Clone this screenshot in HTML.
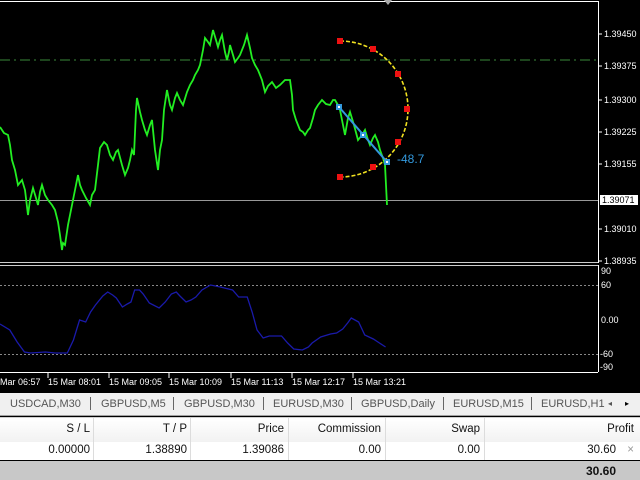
<!DOCTYPE html>
<html><head><style>
*{margin:0;padding:0}
body{width:640px;height:480px;overflow:hidden;background:#000;font-family:"Liberation Sans",sans-serif;position:relative}
.ax{position:absolute;color:#fff;font-size:9px;white-space:nowrap}
.tabs{position:absolute;left:0;top:393px;width:640px;height:22px;background:#f0f0f0;border-bottom:1px solid #a0a0a0;font-size:11px;color:#555}
.tabs span{position:absolute;top:5px}
.tabs i{position:absolute;top:4px;width:1px;height:13px;background:#666}
.hdr{position:absolute;left:0;top:417px;width:640px;height:24px;background:linear-gradient(#fff,#f2f2f2);border-top:1px solid #d0d0d0;border-bottom:1px solid #d5d5d5;font-size:11.5px;color:#111}
.row{position:absolute;left:0;top:442px;width:640px;height:18px;background:#fff;font-size:11.5px;color:#111}
.hdr div,.row div{position:absolute;top:5px;text-align:right}
.row div{top:2px}
.hdr b,.row b{position:absolute;top:0;width:1px;height:100%;background:#dcdcdc}
.foot{position:absolute;left:0;top:461px;width:640px;height:19px;background:#c8c8c8;font-size:12px;font-weight:bold;color:#111}
</style></head><body>
<svg width="640" height="392" style="position:absolute;left:0;top:0">
<line x1="0" y1="1.5" x2="598" y2="1.5" stroke="#fff"/>
<line x1="598.5" y1="1" x2="598.5" y2="263" stroke="#fff"/>
<line x1="0" y1="262.5" x2="598" y2="262.5" stroke="#ccc"/>
<line x1="0" y1="265.5" x2="598" y2="265.5" stroke="#ccc"/>
<line x1="598.5" y1="265" x2="598.5" y2="372" stroke="#fff"/>
<line x1="0" y1="372.5" x2="598" y2="372.5" stroke="#fff"/>
<polygon points="384,0 392,0 388,5" fill="#aaa"/>
<line x1="0" y1="60" x2="598" y2="60" stroke="#3a8a3a" stroke-dasharray="10,4,2,4"/>
<line x1="0" y1="200.5" x2="598" y2="200.5" stroke="#999"/>
<g stroke="#fff"><line x1="598" y1="34" x2="602" y2="34"/><line x1="598" y1="66" x2="602" y2="66"/><line x1="598" y1="100" x2="602" y2="100"/><line x1="598" y1="132" x2="602" y2="132"/><line x1="598" y1="164" x2="602" y2="164"/><line x1="598" y1="229" x2="602" y2="229"/><line x1="598" y1="261" x2="602" y2="261"/></g>
<polyline fill="none" stroke="#22ee22" stroke-width="1.8" points="0,127 4,133 8,135 10,145 12,160 15,170 18,185 22,180 25,190 28,215 30,200 33,188 36,198 38,205 40,192 42,185 45,195 48,200 52,205 55,210 58,222 60,235 62,250 63,243 65,245 68,225 70,215 74,195 78,175 80,185 82,190 86,198 90,205 92,195 95,190 98,165 100,148 104,142 107,145 110,155 113,160 116,152 118,150 122,165 125,175 128,168 130,160 132,150 134,155 136,110 137,98 140,112 142,120 145,130 147,135 150,125 152,120 155,150 158,170 160,150 162,140 164,110 167,90 170,105 172,110 175,98 177,93 180,100 183,105 187,92 190,85 193,80 195,75 198,70 200,65 203,50 205,38 208,42 210,45 212,35 213,30 216,40 218,47 220,40 222,35 225,52 227,60 229,52 230,45 233,55 235,62 238,58 240,55 244,45 247,35 250,48 252,58 255,65 258,70 260,75 262,80 264,88 265,92 268,86 272,82 276,88 280,85 285,80 290,80 292,95 293,110 296,120 300,130 303,132 305,135 308,130 310,128 313,118 315,110 318,105 322,100 326,104 330,105 333,100 335,100 338,105 340,110 343,125 345,135 348,118 350,112 354,125 358,140 362,135 365,130 368,140 370,145 373,138 375,135 378,142 380,150 383,158 385,165 386,185 387,205"/>
<path d="M340,41 A68,68 0 0 1 340,177" fill="none" stroke="#f0e020" stroke-width="1.6" stroke-dasharray="4,2"/>
<g fill="#ee1111"><rect x="337" y="38" width="6" height="6"/><rect x="370" y="46" width="6" height="6"/><rect x="395" y="71" width="6" height="6"/><rect x="404" y="106" width="6" height="6"/><rect x="395" y="139" width="6" height="6"/><rect x="370" y="164" width="6" height="6"/><rect x="337" y="174" width="6" height="6"/></g>
<line x1="339" y1="107" x2="387" y2="162" stroke="#3399dd" stroke-width="2"/>
<g fill="#fff" stroke="#3399dd" stroke-width="2"><rect x="337" y="105" width="4" height="4"/><rect x="361" y="133" width="4" height="4"/><rect x="385" y="160" width="4" height="4"/></g>
<text x="397" y="163" fill="#3399dd" font-size="12" font-family="Liberation Sans">-48.7</text>
<line x1="0" y1="285.5" x2="598" y2="285.5" stroke="#888" stroke-dasharray="2,2"/>
<line x1="0" y1="354.5" x2="598" y2="354.5" stroke="#888" stroke-dasharray="2,2"/>
<g transform="scale(1.224,1)"><polyline fill="none" stroke="#1a1aaa" stroke-width="1.3" vector-effect="non-scaling-stroke" points="0,324 8,330 14,342 20,352 25,353 37,352 45,353 55,353 60,340 65,320 70,322 74,312 78,305 84,296 88,292 92,295 95,298 100,307 104,304 107,302 110,290 114,290 117,294 122,303 130,308 135,302 140,294 144,292 147,296 152,302 156,300 160,297 165,290 172,285 180,287 190,290 195,297 202,297 206,312 210,330 215,338 220,336 230,336 235,343 240,349 247,350 252,347 255,343 262,337 270,334 275,333 280,329 284,323 287,318 293,322 298,335 305,339 310,343 315,347"/></g>
<g stroke="#fff"><line x1="48" y1="373" x2="48" y2="378"/><line x1="109" y1="373" x2="109" y2="378"/><line x1="169" y1="373" x2="169" y2="378"/><line x1="231" y1="373" x2="231" y2="378"/><line x1="292" y1="373" x2="292" y2="378"/><line x1="353" y1="373" x2="353" y2="378"/></g>
</svg>
<div class="ax" style="left:604px;top:29px">1.39450</div>
<div class="ax" style="left:604px;top:61px">1.39375</div>
<div class="ax" style="left:604px;top:95px">1.39300</div>
<div class="ax" style="left:604px;top:127px">1.39225</div>
<div class="ax" style="left:604px;top:159px">1.39155</div>
<div class="ax" style="left:600px;top:195px;background:#fff;color:#000;padding:0 3px 0 2px">1.39071</div>
<div class="ax" style="left:604px;top:224px">1.39010</div>
<div class="ax" style="left:604px;top:256px">1.38935</div>
<div class="ax" style="left:601px;top:266px">90</div>
<div class="ax" style="left:601px;top:280px">60</div>
<div class="ax" style="left:601px;top:315px">0.00</div>
<div class="ax" style="left:600px;top:349px">-60</div>
<div class="ax" style="left:600px;top:362px">-90</div>
<div class="ax" style="left:0;top:377px">Mar 06:57</div>
<div class="ax" style="left:48px;top:377px">15 Mar 08:01</div>
<div class="ax" style="left:109px;top:377px">15 Mar 09:05</div>
<div class="ax" style="left:169px;top:377px">15 Mar 10:09</div>
<div class="ax" style="left:231px;top:377px">15 Mar 11:13</div>
<div class="ax" style="left:292px;top:377px">15 Mar 12:17</div>
<div class="ax" style="left:353px;top:377px">15 Mar 13:21</div>
<div class="tabs">
<span style="left:10px">USDCAD,M30</span><i style="left:90px"></i>
<span style="left:101px">GBPUSD,M5</span><i style="left:173px"></i>
<span style="left:184px">GBPUSD,M30</span><i style="left:263px"></i>
<span style="left:273px">EURUSD,M30</span><i style="left:351px"></i>
<span style="left:361px">GBPUSD,Daily</span><i style="left:443px"></i>
<span style="left:453px">EURUSD,M15</span><i style="left:531px"></i>
<span style="left:541px">EURUSD,H1</span>
<span style="left:608px;font-size:8px;top:6px">◂</span><span style="left:625px;font-size:8px;top:6px;color:#000">▸</span>
</div>
<div class="hdr">
<div style="right:550px">S / L</div><b style="left:93px"></b>
<div style="right:453px">T / P</div><b style="left:190px"></b>
<div style="right:356px">Price</div><b style="left:288px"></b>
<div style="right:259px">Commission</div><b style="left:385px"></b>
<div style="right:160px">Swap</div><b style="left:484px"></b>
<div style="right:6px">Profit</div>
</div>
<div class="row">
<div style="right:550px">0.00000</div><b style="left:93px"></b>
<div style="right:453px">1.38890</div><b style="left:190px"></b>
<div style="right:356px">1.39086</div><b style="left:288px"></b>
<div style="right:259px">0.00</div><b style="left:385px"></b>
<div style="right:160px">0.00</div><b style="left:484px"></b>
<div style="right:24px">30.60</div>
<div style="right:6px;color:#999">×</div>
</div>
<div class="foot"><span style="position:absolute;right:24px;top:3px">30.60</span></div>
</body></html>
